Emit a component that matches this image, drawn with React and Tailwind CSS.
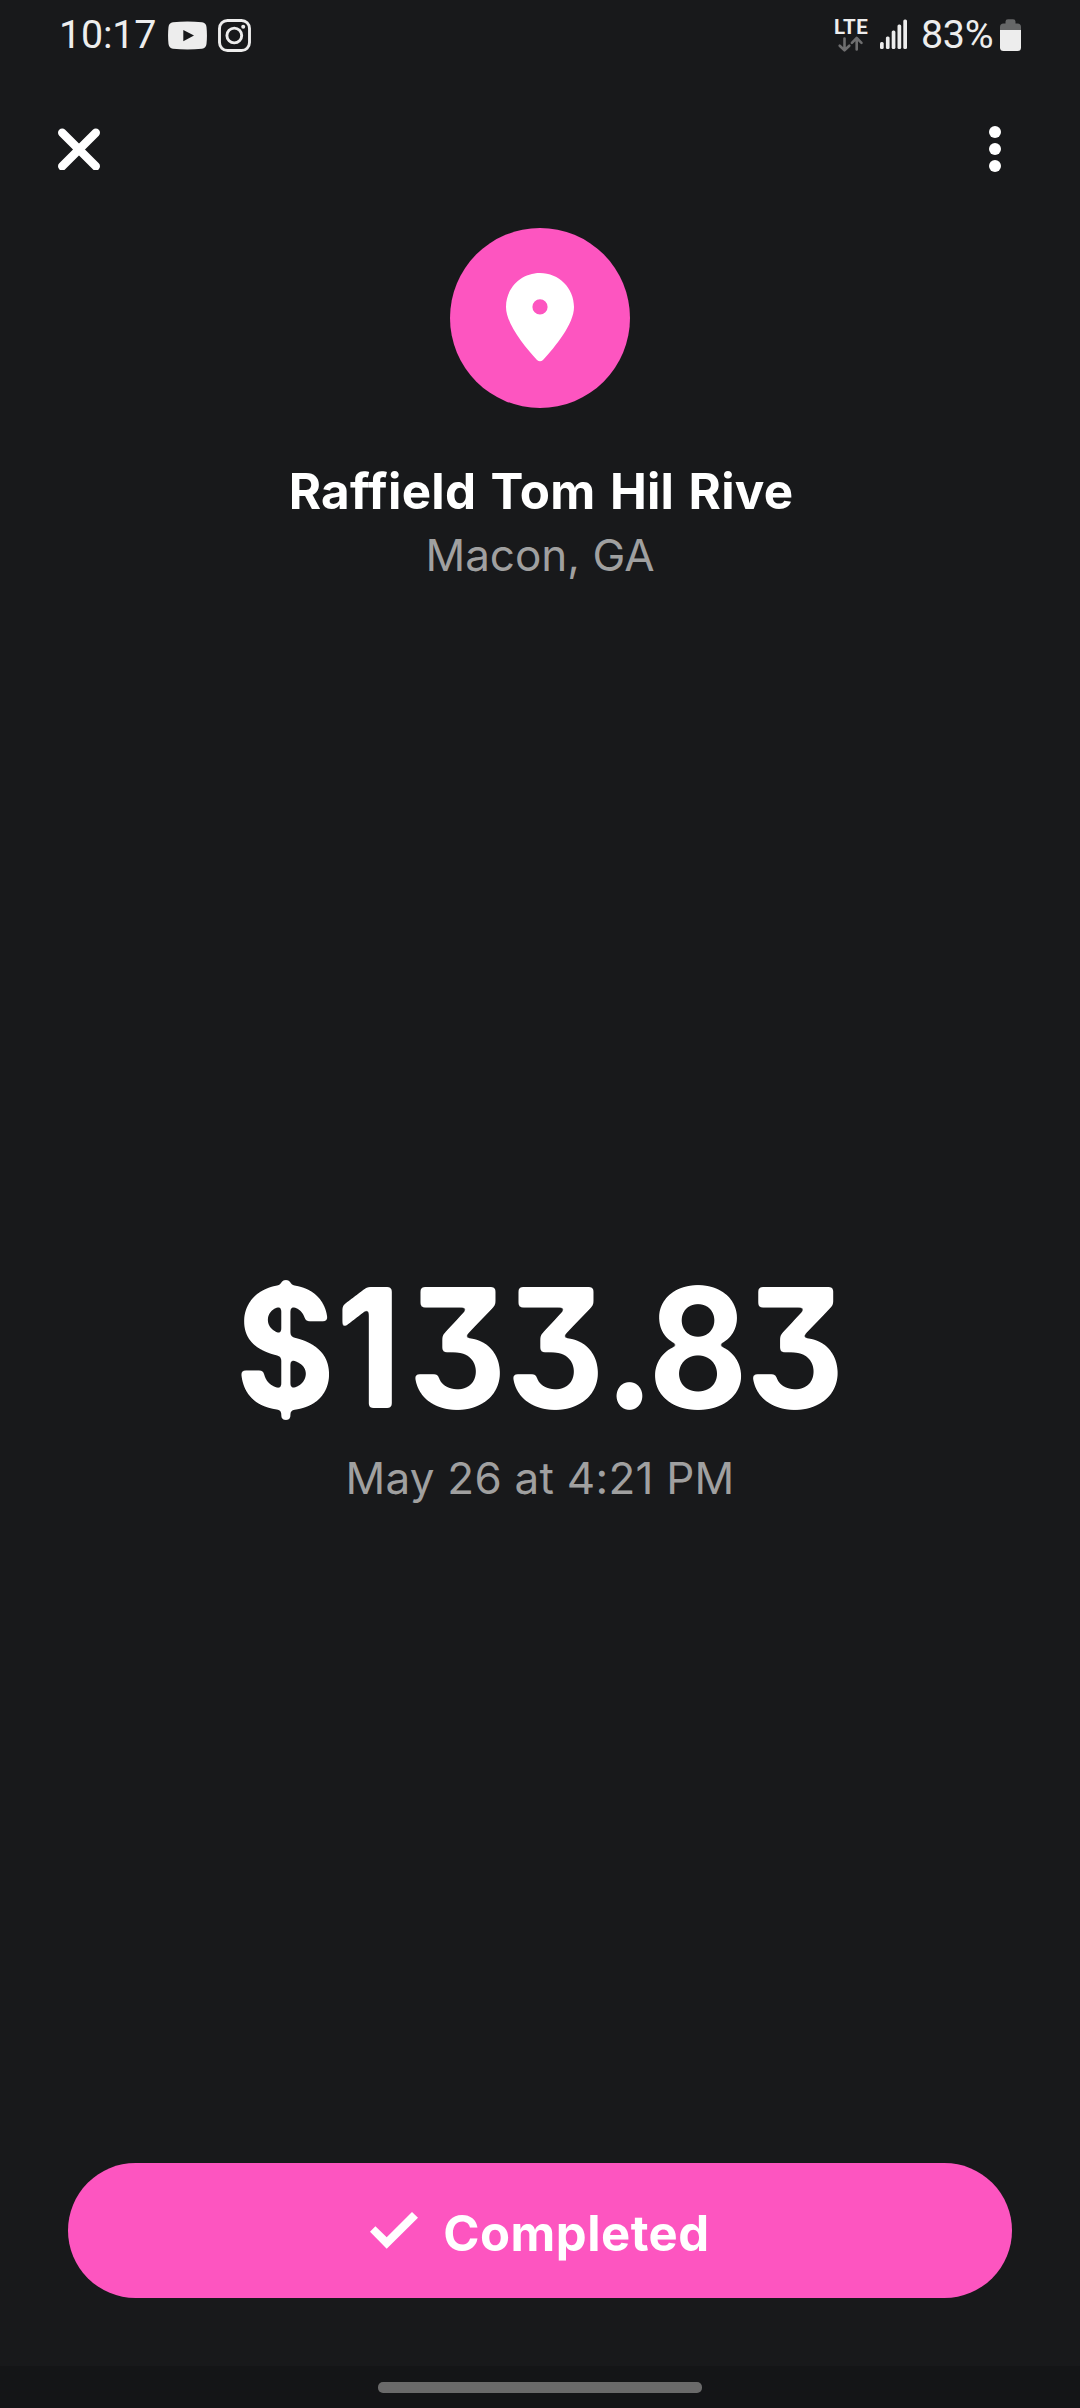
function StatusBar() {
  return (
    <div className="flex h-[69px] items-start justify-between pr-[59px] pl-[59px] font-['Roboto',sans-serif] text-[39.4px] leading-[69px] text-[#ededed]">
      <div className="flex">
        <span className="w-[109px] tracking-[-0.2px]">10:17</span>
        <svg width="39" height="69" viewBox="0 0 39 69">
          <path fill="#ededed" fillRule="evenodd" d="M5 22.3Q19.5 20.9 34 22.3Q38 22.8 38.5 27Q39.4 35.5 38.5 44Q38 48.2 34 48.7Q19.5 50.1 5 48.7Q1 48.2 .5 44Q-.4 35.5 .5 27Q1 22.8 5 22.3ZM15.3 30V41.2L26 35.5Z" />
        </svg>
        <svg className="ml-[11px]" width="33" height="69" viewBox="0 0 33 69" fill="none" stroke="#ededed">
          <rect x="1.5" y="20.5" width="30" height="30" rx="8" strokeWidth="2.9" />
          <circle cx="16.3" cy="35.5" r="7.4" strokeWidth="2.9" />
          <circle cx="25.2" cy="26.8" r="2" fill="#ededed" stroke="none" />
        </svg>
      </div>
      <div className="flex">
        <div className="flex w-[34px] flex-col items-center pt-[18px]">
          <span className="h-[18px] text-[20.5px] leading-[18px] font-bold tracking-[0.4px]">LTE</span>
          <svg width="34" height="17" viewBox="0 0 34 17" fill="none" stroke="#6e6e6f" strokeWidth="2.6" strokeLinecap="round" strokeLinejoin="round">
            <path d="M10.5 2.5V14M5.7 9.7L10.5 14.3L15.3 9.7" />
            <path d="M22.7 13.5V2.5M17.9 6.8L22.7 2L27.5 6.8" />
          </svg>
        </div>
        <svg className="ml-[12px]" width="27" height="69" viewBox="0 0 27 69" fill="#ededed">
          <rect x="0" y="42" width="3.7" height="7" rx="1.5" />
          <rect x="5.9" y="36.5" width="3.7" height="12.5" rx="1.5" />
          <rect x="11.7" y="30.5" width="3.7" height="18.5" rx="1.5" />
          <rect x="17.5" y="24.5" width="3.7" height="24.5" rx="1.5" />
          <rect x="23.3" y="19.5" width="3.7" height="29.5" rx="1.5" />
        </svg>
        <span className="ml-[14px] w-[79px] tracking-[-0.3px]">83%</span>
        <svg width="21" height="69" viewBox="0 0 21 69">
          <path fill="#666768" d="M0 31V27Q0 23.5 3.5 23.5H5.5V21.5Q5.5 19.2 8 19.2H13Q15.5 19.2 15.5 21.5V23.5H17.5Q21 23.5 21 27V31Z" />
          <path fill="#ededed" d="M0 30H21V47.5Q21 51 17.5 51H3.5Q0 51 0 47.5Z" />
        </svg>
      </div>
    </div>
  );
}

function Header() {
  return (
    <header className="flex h-[159px] items-center justify-between pr-[79px] pl-[58px]">
      <button aria-label="Close">
        <svg width="42" height="42" viewBox="0 0 42 42" stroke="#fff" strokeWidth="8.4" strokeLinecap="round">
          <path d="M4.2 4.7L37.8 38.3M37.8 4.7L4.2 38.3" />
        </svg>
      </button>
      <button aria-label="More options" className="flex flex-col gap-[5px] pt-px">
        <span className="size-3 rounded-full bg-white" />
        <span className="size-3 rounded-full bg-white" />
        <span className="size-3 rounded-full bg-white" />
      </button>
    </header>
  );
}

export default function App() {
  return (
    <div className="flex h-[2408px] w-[1080px] flex-col bg-[#18191b] font-['Inter',sans-serif] text-white">
      <StatusBar />
      <Header />
      <section className="flex flex-col items-center">
        <div className="flex size-[180px] items-center justify-center rounded-full bg-[#fd55c0]">
          <svg width="68" height="90" viewBox="0 0 68 90">
            <path fill="#fff" fillRule="evenodd" d="M34 0C15 0 0 15 0 34C0 51 19 74 31 87Q34 89.5 37 87C49 74 68 51 68 34C68 15 53 0 34 0ZM34 26.3A7.6 7.6 0 1 1 34 41.5A7.6 7.6 0 1 1 34 26.3Z" />
          </svg>
        </div>
        <h1 className="mt-[51px] pl-[2px] text-[49.3px] leading-[64px] font-bold tracking-[0.25px] [word-spacing:2.4px]">Raffield Tom Hil Rive</h1>
        <p className="text-[44px] leading-[64px] text-[#a0a0a0]">Macon, GA</p>
      </section>
      <main className="flex flex-1 flex-col items-center justify-center pt-[6px]">
        <svg className="absolute size-0" aria-hidden="true">
          <filter id="soft-corners" x="-5%" y="-5%" width="110%" height="110%">
            <feGaussianBlur stdDeviation="2.2" />
            <feComponentTransfer>
              <feFuncA type="linear" slope="6" intercept="-2.5" />
            </feComponentTransfer>
          </filter>
        </svg>
        <p className="flex scale-x-[0.925] text-[166.4px] leading-[200px] font-bold filter-[url(#soft-corners)] [font-feature-settings:'cv09']">
          <span className="[clip-path:inset(32px_0_28px_0)]">$</span>
          <span className="tracking-[6px]">1</span>
          <span className="tracking-[-1.5px]">33</span>
          <span className="tracking-[-3px]">.8</span>
          <span>3</span>
        </p>
        <p className="text-[44px] leading-[60px] tracking-[0.25px] text-[#a0a0a0]">May 26 at 4:21 PM</p>
      </main>
      <button className="mx-[68px] flex h-[135px] items-center justify-center rounded-full bg-[#fd55c0]">
        <svg width="49" height="37" viewBox="0 0 49 37">
          <path fill="#fff" d="M0 19.7L5.4 14.3L16.7 25.3L42 0L48 5.7L16.7 36.7Z" />
        </svg>
        <span className="ml-[24px] pt-[6px] text-[49px] leading-[64px] font-bold tracking-[0.5px]">Completed</span>
      </button>
      <div className="mt-[68px] flex h-[42px] justify-center bg-[#141517] pt-4">
        <span className="h-[11px] w-[324px] rounded-[5px] bg-[#6a6a6a]" />
      </div>
    </div>
  );
}
